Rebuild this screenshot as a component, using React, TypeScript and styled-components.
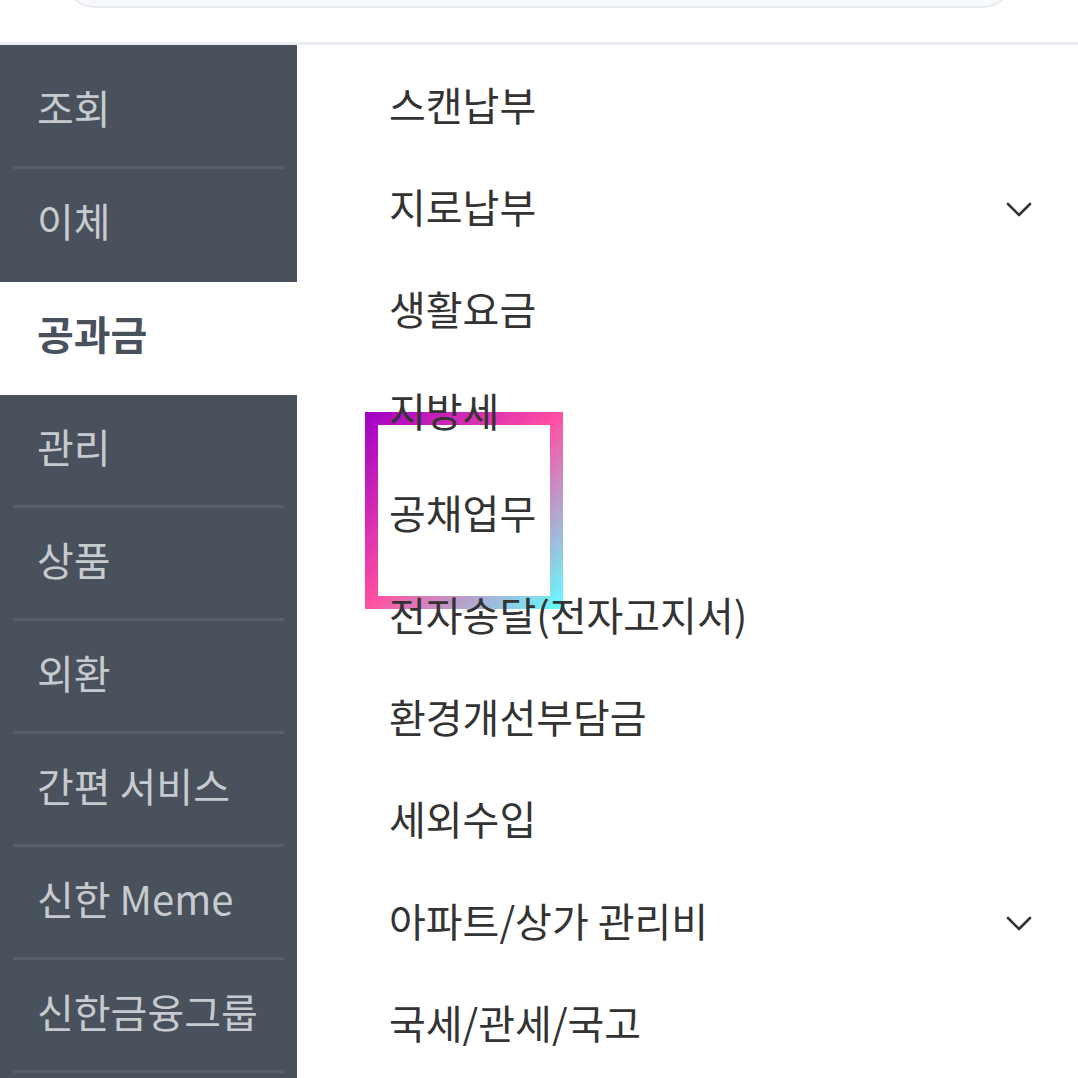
import styled, { createGlobalStyle } from "styled-components";

const GlobalStyle = createGlobalStyle`
  html, body {
    margin: 0;
    padding: 0;
    background: #fff;
  }
  body {
    font-family: "Noto Sans CJK KR", "Noto Sans", sans-serif;
    overflow: hidden;
  }
`;

const Page = styled.div`
  width: 1078px;
  height: 1078px;
  display: flex;
  flex-direction: column;
  overflow: hidden;
`;

const Header = styled.header`
  height: 42px;
  padding: 0 62px;
  border-bottom: 3px solid #e9edf1;
  flex-shrink: 0;
`;

const SearchBox = styled.div`
  height: 80px;
  margin-top: -76px;
  background: #f8f9fc;
  border: 2px solid #e8ebf2;
  border-radius: 34px;
`;

const Body = styled.div`
  flex: 1;
  display: grid;
  grid-template-columns: 297px 1fr;
  min-height: 0;
`;

const SideNav = styled.nav`
  background: #48515c;
  padding-top: 11px;
  display: flex;
  flex-direction: column;
`;

const SideItem = styled.div<{ $active?: boolean }>`
  height: 113px;
  flex-shrink: 0;
  display: flex;
  flex-direction: column;
  background: ${(p) => (p.$active ? "#fff" : "transparent")};
`;

const SideLabel = styled.div<{ $active?: boolean }>`
  flex: 1;
  display: flex;
  align-items: center;
  padding-left: 37px;
  padding-bottom: 8px;
  font-size: 40px;
  font-weight: ${(p) => (p.$active ? 700 : 400)};
  color: ${(p) => (p.$active ? "#48515c" : "#c7cace")};
`;

const Divider = styled.div<{ $hidden?: boolean }>`
  height: 3px;
  margin: 0 13px;
  background: ${(p) => (p.$hidden ? "transparent" : "#57606b")};
`;

const SubMenu = styled.ul`
  list-style: none;
  margin: 0;
  padding: 8px 0 0;
`;

const SubRow = styled.li`
  position: relative;
  height: 102px;
  display: flex;
  align-items: center;
  justify-content: space-between;
  padding: 0 46px 0 92px;
`;

const SubLabel = styled.span`
  position: relative;
  z-index: 2;
  font-size: 40px;
  color: #333;
`;

const Focus = styled.div`
  position: absolute;
  z-index: 1;
  left: 68px;
  top: -49px;
  width: 198px;
  height: 197px;
  box-sizing: border-box;
  padding: 13px;
  background: linear-gradient(135deg, #a000c8 0%, #ff50a2 50%, #62ffff 100%);
`;

const FocusInner = styled.div`
  width: 100%;
  height: 100%;
  background: #fff;
`;

const ChevronIcon = styled.svg`
  margin-top: 8px;
  flex-shrink: 0;
`;

const Chevron = () => (
  <ChevronIcon width="26" height="16" viewBox="0 0 26 16" fill="none">
    <polyline
      points="2,2 13,13 24,2"
      stroke="#333"
      strokeWidth="2.6"
      strokeLinecap="round"
      strokeLinejoin="round"
    />
  </ChevronIcon>
);

const sideItems = [
  "조회",
  "이체",
  "공과금",
  "관리",
  "상품",
  "외환",
  "간편 서비스",
  "신한 Meme",
  "신한금융그룹",
];
const activeIndex = 2;

const subItems: { label: string; expandable?: boolean; focused?: boolean }[] = [
  { label: "스캔납부" },
  { label: "지로납부", expandable: true },
  { label: "생활요금" },
  { label: "지방세" },
  { label: "공채업무", focused: true },
  { label: "전자송달(전자고지서)" },
  { label: "환경개선부담금" },
  { label: "세외수입" },
  { label: "아파트/상가 관리비", expandable: true },
  { label: "국세/관세/국고" },
];

export default function App() {
  return (
    <Page>
      <GlobalStyle />
      <Header>
        <SearchBox />
      </Header>
      <Body>
        <SideNav>
          {sideItems.map((label, i) => (
            <SideItem key={label} $active={i === activeIndex}>
              <SideLabel $active={i === activeIndex}>{label}</SideLabel>
              <Divider $hidden={i === activeIndex || i === activeIndex - 1} />
            </SideItem>
          ))}
        </SideNav>
        <SubMenu>
          {subItems.map((item) => (
            <SubRow key={item.label}>
              {item.focused && (
                <Focus>
                  <FocusInner />
                </Focus>
              )}
              <SubLabel>{item.label}</SubLabel>
              {item.expandable && <Chevron />}
            </SubRow>
          ))}
        </SubMenu>
      </Body>
    </Page>
  );
}
